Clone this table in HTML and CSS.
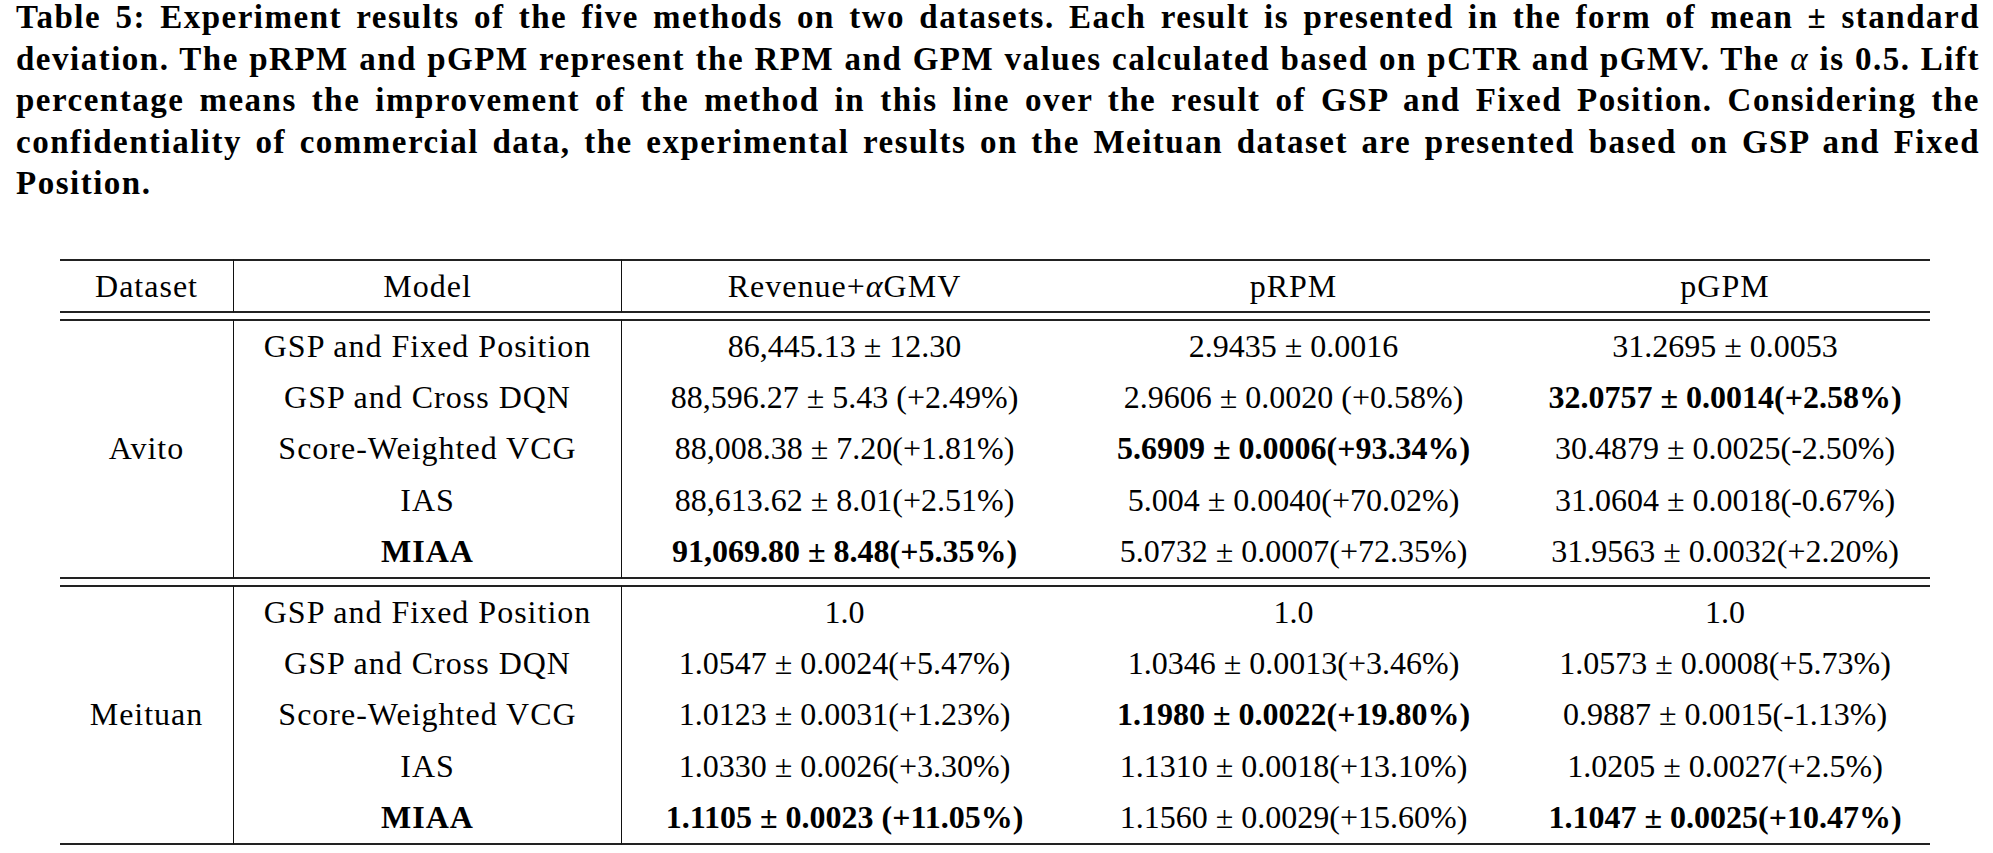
FILE: index.html
```html
<!DOCTYPE html>
<html lang="en">
<head>
<meta charset="utf-8">
<title>Table 5: Experiment results</title>
<link rel="stylesheet" href="styles.css">
</head>
<body>
<div class="page">
  <div class="caption">
    <span class="cap-line">Table 5: Experiment results of the five methods on two datasets. Each result is presented in the form of mean ± standard</span>
    <span class="cap-line">deviation. The pRPM and pGPM represent the RPM and GPM values calculated based on pCTR and pGMV. The <i>α</i> is 0.5. Lift</span>
    <span class="cap-line">percentage means the improvement of the method in this line over the result of GSP and Fixed Position. Considering the</span>
    <span class="cap-line">confidentiality of commercial data, the experimental results on the Meituan dataset are presented based on GSP and Fixed</span>
    <span class="cap-line cap-last">Position.</span>
  </div>

  <table class="results">
    <colgroup>
      <col class="c-dataset">
      <col class="c-model">
      <col class="c-rev">
      <col class="c-rpm">
      <col class="c-gpm">
    </colgroup>
    <thead>
      <tr>
        <th class="txt vr">Dataset</th>
        <th class="txt vr">Model</th>
        <th class="txt">Revenue+<i class="alpha">α</i>GMV</th>
        <th class="txt">pRPM</th>
        <th class="txt">pGPM</th>
      </tr>
    </thead>
    <tbody class="sep"><tr><td colspan="5"></td></tr></tbody>
    <tbody class="group">
      <tr>
        <td class="txt vr ds" rowspan="5">Avito</td>
        <td class="txt vr">GSP and Fixed Position</td>
        <td>86,445.13 ± 12.30</td>
        <td>2.9435 ± 0.0016</td>
        <td>31.2695 ± 0.0053</td>
      </tr>
      <tr>
        <td class="txt vr">GSP and Cross DQN</td>
        <td>88,596.27 ± 5.43 (+2.49%)</td>
        <td>2.9606 ± 0.0020 (+0.58%)</td>
        <td><b>32.0757 ± 0.0014(+2.58%)</b></td>
      </tr>
      <tr>
        <td class="txt vr">Score-Weighted VCG</td>
        <td>88,008.38 ± 7.20(+1.81%)</td>
        <td><b>5.6909 ± 0.0006(+93.34%)</b></td>
        <td>30.4879 ± 0.0025(-2.50%)</td>
      </tr>
      <tr>
        <td class="txt vr">IAS</td>
        <td>88,613.62 ± 8.01(+2.51%)</td>
        <td>5.004 ± 0.0040(+70.02%)</td>
        <td>31.0604 ± 0.0018(-0.67%)</td>
      </tr>
      <tr>
        <td class="txt vr"><b>MIAA</b></td>
        <td><b>91,069.80 ± 8.48(+5.35%)</b></td>
        <td>5.0732 ± 0.0007(+72.35%)</td>
        <td>31.9563 ± 0.0032(+2.20%)</td>
      </tr>
    </tbody>
    <tbody class="sep"><tr><td colspan="5"></td></tr></tbody>
    <tbody class="group">
      <tr>
        <td class="txt vr ds" rowspan="5">Meituan</td>
        <td class="txt vr">GSP and Fixed Position</td>
        <td>1.0</td>
        <td>1.0</td>
        <td>1.0</td>
      </tr>
      <tr>
        <td class="txt vr">GSP and Cross DQN</td>
        <td>1.0547 ± 0.0024(+5.47%)</td>
        <td>1.0346 ± 0.0013(+3.46%)</td>
        <td>1.0573 ± 0.0008(+5.73%)</td>
      </tr>
      <tr>
        <td class="txt vr">Score-Weighted VCG</td>
        <td>1.0123 ± 0.0031(+1.23%)</td>
        <td><b>1.1980 ± 0.0022(+19.80%)</b></td>
        <td>0.9887 ± 0.0015(-1.13%)</td>
      </tr>
      <tr>
        <td class="txt vr">IAS</td>
        <td>1.0330 ± 0.0026(+3.30%)</td>
        <td>1.1310 ± 0.0018(+13.10%)</td>
        <td>1.0205 ± 0.0027(+2.5%)</td>
      </tr>
      <tr>
        <td class="txt vr"><b>MIAA</b></td>
        <td><b>1.1105 ± 0.0023 (+11.05%)</b></td>
        <td>1.1560 ± 0.0029(+15.60%)</td>
        <td><b>1.1047 ± 0.0025(+10.47%)</b></td>
      </tr>
    </tbody>
  </table>
</div>
</body>
</html>
```

FILE: styles.css
```css
html, body {
  margin: 0;
  padding: 0;
  background: #ffffff;
}

body {
  font-family: "Liberation Serif", "Times New Roman", serif;
  color: #000000;
  width: 1993px;
  height: 853px;
  overflow: hidden;
}

.page {
  display: flex;
  flex-direction: column;
}

.caption {
  margin: -3px 13px 0 16px;
  width: 1964px;
  font-weight: 700;
  font-size: 33px;
  line-height: 41.5px;
  letter-spacing: 1.5px;
  display: flex;
  flex-direction: column;
}

.cap-line {
  display: block;
  white-space: nowrap;
  text-align: justify;
  text-align-last: justify;
}

.cap-line.cap-last {
  text-align-last: left;
}

.caption i {
  font-weight: 400;
  font-style: italic;
}

.results {
  margin: 54.5px 0 0 60px;
  width: 1870px;
  table-layout: fixed;
  border-collapse: separate;
  border-spacing: 0;
  font-size: 32px;
  line-height: 37px;
}

.c-dataset { width: 174px; }
.c-model { width: 388px; }
.c-rev { width: 445px; }
.c-rpm { width: 453px; }
.c-gpm { width: 410px; }

.results th,
.results td {
  padding: 0;
  text-align: center;
  vertical-align: middle;
  white-space: nowrap;
  font-weight: 400;
}

.results .txt {
  letter-spacing: 1px;
}

.results b {
  font-weight: 700;
}

.results .alpha {
  letter-spacing: 0;
  margin-right: 1px;
}

.results thead tr {
  height: 54px;
}

.results th {
  border-top: 2px solid #222;
  border-bottom: 2px solid #222;
}

.results .vr {
  border-right: 1px solid #111;
}

.results tbody.sep tr {
  height: 6px;
}

.results tbody.sep td {
  height: 6px;
  font-size: 0;
  line-height: 0;
}

.results tbody.group tr {
  height: 51.2px;
}

.results tbody.group tr:first-child,
.results tbody.group tr:last-child {
  height: 53.2px;
}

.results tbody.group tr:first-child td {
  border-top: 2px solid #222;
}

.results tbody.group tr:last-child td,
.results tbody.group td.ds {
  border-bottom: 2px solid #222;
}
```
